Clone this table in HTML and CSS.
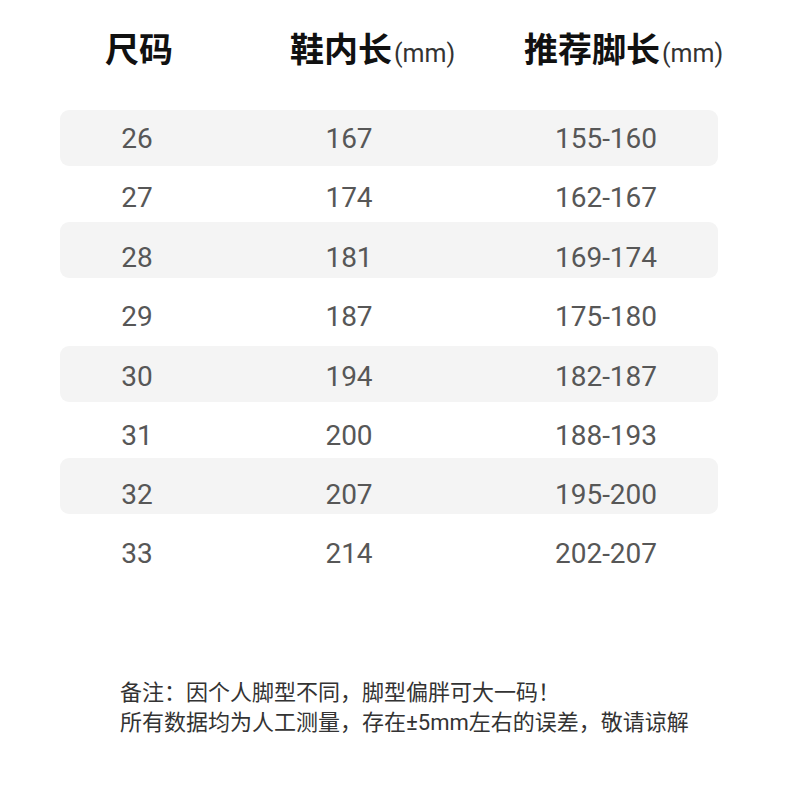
FILE: index.html
```html
<!DOCTYPE html>
<html lang="zh-CN">
<head>
<meta charset="utf-8">
<link rel="stylesheet" href="styles.css">
</head>
<body>
<div class="page">
  <div class="head">
    <div class="hc h1">尺码</div>
    <div class="hc h2">鞋内长<span class="unit">(mm)</span></div>
    <div class="hc h3">推荐脚长<span class="unit">(mm)</span></div>
  </div>
  <div class="table">
    <div class="row band p2"><span>26</span><span>167</span><span>155-160</span></div>
    <div class="row p8"><span>27</span><span>174</span><span>162-167</span></div>
    <div class="row band p16"><span>28</span><span>181</span><span>169-174</span></div>
    <div class="row tall p10"><span>29</span><span>187</span><span>175-180</span></div>
    <div class="row band p6"><span>30</span><span>194</span><span>182-187</span></div>
    <div class="row p12"><span>31</span><span>200</span><span>188-193</span></div>
    <div class="row band p18"><span>32</span><span>207</span><span>195-200</span></div>
    <div class="row p24"><span>33</span><span>214</span><span>202-207</span></div>
  </div>
  <div class="note">
    <p>备注：因个人脚型不同，脚型偏胖可大一码！</p>
    <p>所有数据均为人工测量，存在±5mm左右的误差，敬请谅解</p>
  </div>
</div>
</body>
</html>
```
FILE: styles.css
```css
* { box-sizing: border-box; }
html, body { margin: 0; padding: 0; background: #fff; }
body { font-family: Roboto, "Noto Sans CJK SC", sans-serif; }
.page { width: 800px; height: 800px; padding: 0 82px 0 60px; }
.head {
  display: grid;
  grid-template-columns: 154px 270px 1fr;
  height: 110px;
  padding-top: 24px;
}
.hc {
  font-family: "Noto Sans CJK SC", sans-serif;
  font-size: 34px;
  font-weight: 700;
  color: #111;
  line-height: 48px;
  white-space: nowrap;
}
.h1 { padding-left: 45px; }
.h2 { padding-left: 76px; }
.h3 { padding-left: 40px; }
.unit {
  font-family: Roboto, sans-serif;
  font-size: 25px;
  font-weight: 400;
  color: #333;
  margin-left: 2px;
}
.table { display: flex; flex-direction: column; }
.row {
  display: grid;
  grid-template-columns: 154px 270px 1fr;
  align-items: center;
  height: 56px;
  font-family: Roboto, sans-serif;
  font-size: 28px;
  line-height: 28px;
  color: #575757;
  text-align: center;
}
.row span:last-child { padding-left: 10px; }
.row.band { background: #f4f4f4; border-radius: 9px; }
.row.tall { height: 68px; }
.p2 { padding-top: 2px; }
.p6 { padding-top: 6px; }
.p8 { padding-top: 8px; }
.p10 { padding-top: 10px; }
.p12 { padding-top: 12px; }
.p16 { padding-top: 16px; }
.p18 { padding-top: 18px; }
.p24 { padding-top: 24px; }
.note {
  margin-top: 108px;
  padding-left: 60px;
  font-size: 22px;
  color: #333;
  line-height: 30px;
}
.note p { margin: 0; white-space: nowrap; }
```
